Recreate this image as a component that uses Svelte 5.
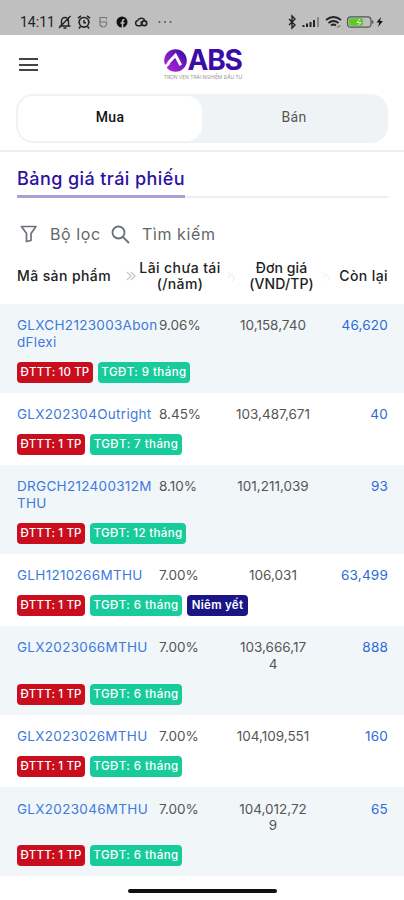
<script lang="ts">
  type Bond = {
    code: string
    rate: string
    price: string
    left: string
    min: number
    months: number
    listed?: boolean
  }

  // line breaks follow the narrow mobile columns
  const bonds: Bond[] = [
    { code: 'GLXCH2123003Abon\ndFlexi', rate: '9.06%', price: '10,158,740', left: '46,620', min: 10, months: 9 },
    { code: 'GLX202304Outright', rate: '8.45%', price: '103,487,671', left: '40', min: 1, months: 7 },
    { code: 'DRGCH212400312M\nTHU', rate: '8.10%', price: '101,211,039', left: '93', min: 1, months: 12 },
    { code: 'GLH1210266MTHU', rate: '7.00%', price: '106,031', left: '63,499', min: 1, months: 6, listed: true },
    { code: 'GLX2023066MTHU', rate: '7.00%', price: '103,666,17\n4', left: '888', min: 1, months: 6 },
    { code: 'GLX2023026MTHU', rate: '7.00%', price: '104,109,551', left: '160', min: 1, months: 6 },
    { code: 'GLX2023046MTHU', rate: '7.00%', price: '104,012,72\n9', left: '65', min: 1, months: 6 }
  ]

  let side = $state('buy')
</script>

<div class="screen">
  <div class="status">
    <span class="time">14:11</span>
    <svg class="status-left" width="120" height="16" viewBox="0 0 120 16" fill="none" stroke="#222" stroke-width="1.2">
      <path d="M1.500 12h11M3.500 11.500V7a3.500 3.500 0 0 1 7 0v4.500M5.500 14h3M12.500 2L1 14" stroke-width="1.400" />
      <circle cx="26" cy="8.300" r="4.800" stroke-width="1.700" />
      <path d="M26 6v2.800h2M20 4.200l3-2.400M32 4.200l-3-2.400M22.500 12.500l-1.500 2M29.500 12.500l1.500 2" stroke-width="1.500" />
      <path d="M48.500 3.500h-6.500v4.500h6.500v3q-3.200 4-6.500 0V8M48.500 3.500v2" stroke="#777" />
      <circle cx="64" cy="8" r="5.500" fill="#111" stroke="none" />
      <path d="M64.500 14V7.500q0-2 2-2M62.500 9h4" stroke="#bfbfbf" stroke-width="1.500" />
      <path d="M83 11.800h-3a2.700 2.700 0 0 1-.3-5.300 4 4 0 0 1 7-.5" stroke-width="1.500" />
      <circle cx="86.300" cy="9.300" r="2.400" stroke-width="1.700" />
      <path d="M83.200 12V7.500" stroke-width="1.500" />
      <g fill="#555" stroke="none"><circle cx="101.500" cy="8" r="1" /><circle cx="107" cy="8" r="1" /><circle cx="112.500" cy="8" r="1" /></g>
    </svg>
    <svg class="status-right" width="98" height="16" viewBox="0 0 98 16" fill="none" stroke="#222" stroke-width="1.400">
      <path d="M1 5l6 6-3 3V2l3 3-6 6" />
      <path d="M15.500 13v-2M19 13v-3.500M22.500 13V8M26 13V6" stroke-width="2" />
      <path d="M30 13V3" stroke="#888" stroke-width="2" />
      <path d="M38 6q7.500-6 15 0M40.500 9q5-4 10 0M43 11.500q2.500-2 5 0" stroke-width="1.800" />
      <path d="M49 13.500l3.500-2" stroke="#777" />
      <rect x="59.500" y="2.800" width="23.500" height="10.400" rx="3.500" stroke="#555" stroke-width="1.200" />
      <rect x="61" y="4.300" width="14" height="7.400" rx="2" fill="#5cc829" stroke="none" />
      <path d="M72 5l-3 3.500h4L70.500 11" stroke="#e2f5d8" stroke-width="1" />
      <path d="M84.500 6.500v3" stroke="#555" stroke-width="1.600" />
      <path d="M93 3l-4.500 5.500h2.800L90 13l5-6h-3z" fill="#111" stroke="none" />
    </svg>
  </div>

  <header>
    <button class="menu" aria-label="Menu"><i></i><i></i><i></i></button>
    <div class="logo">
      <div class="brand">
        <svg width="23" height="23" viewBox="0 0 22 22">
          <defs>
            <linearGradient id="mark" x1="0" y1="1" x2="1" y2="0">
              <stop offset="0" stop-color="#c020e0" />
              <stop offset=".5" stop-color="#7a1cc4" />
              <stop offset="1" stop-color="#2a0a9c" />
            </linearGradient>
          </defs>
          <circle cx="11" cy="11" r="10.800" fill="url(#mark)" />
          <path d="M4 13.500L11 6l5 9.500" fill="none" stroke="#fff" stroke-width="2.800" />
          <path d="M0 16l4.500-4 1.500 2-4 4.500z" fill="#fff" />
        </svg>
        <span>ABS</span>
      </div>
      <div class="slogan">TRỌN VẸN TRẢI NGHIỆM ĐẦU TƯ</div>
    </div>
  </header>

  <div class="switch">
    <button class:active={side === 'buy'} onclick={() => (side = 'buy')}>Mua</button>
    <button class:active={side === 'sell'} onclick={() => (side = 'sell')}>Bán</button>
  </div>

  <div class="title"><h1>Bảng giá trái phiếu</h1></div>

  <div class="tools">
    <svg width="18" height="18" viewBox="0 0 18 18" fill="none" stroke="#6c7178" stroke-width="1.700" stroke-linejoin="round">
      <path d="M1.500 1.500h14.500l-5 7v7l-4.500 1V8.500z" />
    </svg>
    <span class="filter">Bộ lọc</span>
    <svg width="19" height="19" viewBox="0 0 19 19" fill="none" stroke="#6c7178" stroke-width="1.800">
      <circle cx="7.500" cy="7.500" r="6" /><path d="M12 12l6 6" />
    </svg>
    <span class="search">Tìm kiếm</span>
  </div>

  <div class="row head">
    <span class="name">Mã sản phẩm</span>
    <svg width="10" height="10" viewBox="0 0 10 10" fill="none" stroke="#c4c4c4" stroke-width="1.200"><path d="M1 1l4 4-4 4M5 1l4 4-4 4" /></svg>
    <span class="yield">Lãi chưa tái<br />(/năm)</span>
    <svg width="10" height="12" viewBox="0 0 10 12" fill="none" stroke="#e9e9e9"><path d="M1 2l3 3-3 3M5 5l3 3-3 3" /></svg>
    <span class="unit">Đơn giá<br />(VND/TP)</span>
    <svg width="10" height="12" viewBox="0 0 10 12" fill="none" stroke="#efefef"><path d="M1 2l3 3-3 3M5 5l3 3-3 3" /></svg>
    <span class="left">Còn lại</span>
  </div>

  <div class="list">
    {#each bonds as bond}
      <div class="bond">
        <div class="row">
          <span class="code">{bond.code}</span>
          <span class="rate">{bond.rate}</span>
          <span class="price">{bond.price}</span>
          <span class="left">{bond.left}</span>
        </div>
        <div class="tags">
          <span class="tag red" class:wide={bond.min > 9}>ĐTTT: {bond.min} TP</span>
          <span class="tag green" class:wide={bond.months > 9}>TGĐT: {bond.months} tháng</span>
          {#if bond.listed}<span class="tag navy">Niêm yết</span>{/if}
        </div>
      </div>
    {/each}
  </div>

  <div class="home"></div>
</div>

<style>
  :global(body) {
    background: #fff;
  }

  .screen {
    width: 404px;
    height: 900px;
    overflow: hidden;
    background: #fff;
    font-family: Inter, 'Noto Sans', sans-serif;
    color: #222;
  }

  .status {
    display: flex;
    align-items: center;
    box-sizing: border-box;
    height: 35px;
    padding: 9px 18px 0 20px;
    background: #bfbfbf;
  }

  .time {
    width: 38px;
    font-family: Roboto, sans-serif;
    font-size: 14px;
  }

  .status-right {
    margin-left: auto;
  }

  header {
    display: grid;
    grid-template-columns: 20px 1fr 20px;
    height: 59px;
    padding: 0 19px;
  }

  button {
    border: 0;
    padding: 0;
    background: none;
    font: inherit;
  }

  .menu {
    display: flex;
    flex-direction: column;
    gap: 3.5px;
    padding-top: 23px;
  }

  .menu i {
    width: 19px;
    height: 2px;
    background: #444;
  }

  .logo {
    display: flex;
    flex-direction: column;
    align-items: center;
    padding-top: 12px;
  }

  .brand {
    display: flex;
    align-items: center;
    gap: 1px;
    height: 26px;
    padding-left: 1px;
    font-size: 28px;
    line-height: 26px;
    font-weight: 700;
    letter-spacing: -1.3px;
    color: #3b0ca6;
  }

  .slogan {
    margin-top: 1px;
    padding-left: 2px;
    font-size: 4.9px;
    line-height: 6px;
    color: #999;
    white-space: nowrap;
  }

  .switch {
    display: flex;
    box-sizing: border-box;
    height: 49px;
    margin: 0 16px;
    padding: 2px;
    border-radius: 17px;
    background: #f0f3f5;
  }

  .switch button {
    flex: 1;
    padding-bottom: 3px;
    border-radius: 15px;
    font-family: Roboto, sans-serif;
    font-size: 14px;
    letter-spacing: 0.3px;
    color: #555;
  }

  .switch .active {
    background: #fff;
    font-weight: 500;
    color: #111;
  }

  .title {
    margin-top: 7px;
    padding: 0 16px 0 17px;
    border-top: 2px solid #eee;
  }

  h1 {
    position: relative;
    height: 44px;
    margin: 0;
    border-bottom: 2px solid #eee;
    font-size: 18px;
    line-height: 54px;
    font-weight: 500;
    letter-spacing: 0.42px;
    color: #2d109f;
  }

  h1::after {
    content: '';
    position: absolute;
    left: 0;
    bottom: -2px;
    width: 168px;
    height: 3px;
    background: #aaa0d6;
  }

  .tools {
    display: flex;
    align-items: center;
    height: 26px;
    margin-top: 23px;
    padding-left: 20px;
    font-size: 16px;
    letter-spacing: 0.6px;
    color: #666;
  }

  .filter {
    width: 50px;
    margin: 0 11px 0 12px;
    white-space: nowrap;
  }

  .search {
    margin-left: 12px;
  }

  .row {
    display: grid;
    grid-template-columns: 142px 62px 104px 1fr;
    padding: 0 16px 0 17px;
  }

  .head {
    grid-template-columns: 107px 14px 84px 20px 79px 12px 1fr;
    align-items: center;
    height: 57px;
    font-size: 14px;
    line-height: 16px;
    font-weight: 500;
    letter-spacing: 0.4px;
    white-space: nowrap;
  }

  .head svg {
    justify-self: center;
  }

  .head .unit {
    letter-spacing: 0.1px;
  }

  .yield,
  .unit {
    text-align: center;
  }

  .bond {
    padding: 13.4px 0 9.7px;
    font-size: 13.5px;
    line-height: 16.3px;
    color: #555;
  }

  .bond:nth-child(odd) {
    background: #f1f6f9;
  }

  .code {
    white-space: pre;
    letter-spacing: 0.3px;
    color: #4079dc;
  }

  .price {
    white-space: pre;
    text-align: center;
  }

  .left {
    text-align: right;
  }

  .bond .left {
    letter-spacing: 0.2px;
    color: #2c6ad8;
  }

  .tags {
    display: flex;
    gap: 5px;
    margin-top: 12px;
    padding-left: 17px;
  }

  .tag {
    box-sizing: border-box;
    height: 21px;
    border-radius: 4px;
    font-size: 11.5px;
    line-height: 21px;
    font-weight: 500;
    text-align: center;
    white-space: nowrap;
    color: #fff;
  }

  .red {
    width: 68px;
    background: #c90e1e;
    letter-spacing: 0.15px;
  }

  .red.wide {
    width: 76px;
  }

  .green {
    width: 92px;
    background: #18cb9b;
    letter-spacing: 0.45px;
  }

  .green.wide {
    width: 96px;
    letter-spacing: 0.35px;
  }

  .navy {
    width: 61px;
    background: #1c1587;
    font-weight: 600;
    letter-spacing: 0.3px;
  }

  .home {
    width: 149px;
    height: 4px;
    margin: 13px auto 0;
    border-radius: 2px;
    background: #111;
  }
</style>
